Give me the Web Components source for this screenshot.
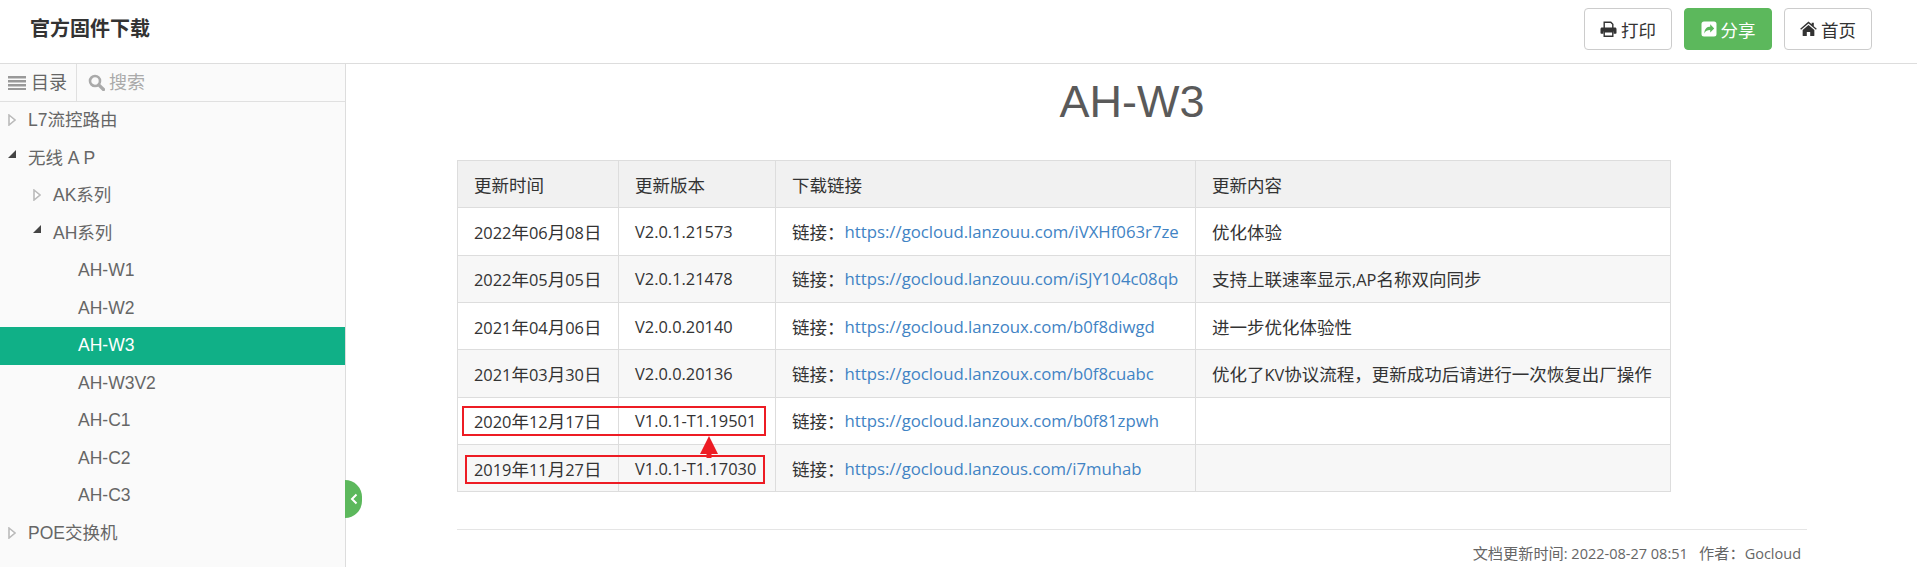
<!DOCTYPE html>
<html lang="zh-CN">
<head>
<meta charset="UTF-8">
<title>AH-W3</title>
<style>
  html, body { margin: 0; height: 100%; overflow: hidden; background: #fff; }
  body { font-family: "Liberation Sans", "Noto Sans CJK SC", sans-serif; }
  fw-row a { color: #4183c4; font-size: 16.750px; }
  fw-row i { font-style: normal; font-size: 17.500px; }
  doc-article span[slot="foot"] i { font-style: normal; font-size: 15.200px; }
</style>
</head>
<body>
<doc-header>
  <span slot="title">官方固件下载</span>
  <doc-button icon="print">打印</doc-button>
  <doc-button icon="share" primary>分享</doc-button>
  <doc-button icon="home">首页</doc-button>
</doc-header>
<doc-shell>
  <doc-sidebar slot="side">
    <tree-item arrow="closed">L7流控路由</tree-item>
    <tree-item arrow="open">无线 A P</tree-item>
    <tree-item level="1" arrow="closed">AK系列</tree-item>
    <tree-item level="1" arrow="open">AH系列</tree-item>
    <tree-item level="2">AH-W1</tree-item>
    <tree-item level="2">AH-W2</tree-item>
    <tree-item level="2" active>AH-W3</tree-item>
    <tree-item level="2">AH-W3V2</tree-item>
    <tree-item level="2">AH-C1</tree-item>
    <tree-item level="2">AH-C2</tree-item>
    <tree-item level="2">AH-C3</tree-item>
    <tree-item arrow="closed">POE交换机</tree-item>
  </doc-sidebar>
  <doc-article>
    <span slot="title">AH-W3</span>
    <fw-table>
      <fw-row head><span>更新时间</span><span>更新版本</span><span>下载链接</span><span>更新内容</span></fw-row>
      <fw-row><span>2022年06月08日</span><span>V2.0.1.21573</span><span>链接：<a>https://gocloud.lanzouu.com/iVXHf063r7ze</a></span><span>优化体验</span></fw-row>
      <fw-row striped><span>2022年05月05日</span><span>V2.0.1.21478</span><span>链接：<a>https://gocloud.lanzouu.com/iSJY104c08qb</a></span><span>支持上联速率显示,AP名称双向同步</span></fw-row>
      <fw-row><span>2021年04月06日</span><span>V2.0.0.20140</span><span>链接：<a>https://gocloud.lanzoux.com/b0f8diwgd</a></span><span>进一步优化体验性</span></fw-row>
      <fw-row striped><span>2021年03月30日</span><span>V2.0.0.20136</span><span>链接：<a>https://gocloud.lanzoux.com/b0f8cuabc</a></span><span>优化了KV协议流程，更新成功后请进行一次恢复出厂操作</span></fw-row>
      <fw-row><span>2020年12月17日</span><span>V1.0.1-T1.19501</span><span>链接：<a>https://gocloud.lanzoux.com/b0f81zpwh</a></span><span></span></fw-row>
      <fw-row striped><span>2019年11月27日</span><span>V1.0.1-T1.17030</span><span>链接：<a>https://gocloud.lanzous.com/i7muhab</a></span><span></span></fw-row>
    </fw-table>
    <span slot="foot"><i>文档更新时间</i>: 2022-08-27 08:51 &nbsp; <i>作者：</i>Gocloud</span>
  </doc-article>
</doc-shell>

<script>
  const ICONS = {
    print: '<svg width="17" height="16" viewBox="0 0 17 16"><path d="M4.200 7V1.200h6.600l2 2V7" fill="none" stroke="currentColor" stroke-width="1.400"/><path fill="currentColor" d="M2 6.500h13c.9 0 1.500.6 1.500 1.500v4c0 .5-.3.800-.8.800H13.500v-2.300h-10v2.300H1.300c-.5 0-.8-.3-.8-.8V8c0-.9.6-1.500 1.500-1.500z"/><path d="M4.200 10.800h8.600v4.500H4.200z" fill="#fff" stroke="currentColor" stroke-width="1.400"/></svg>',
    share: '<svg width="16" height="16" viewBox="0 0 16 16"><path fill="currentColor" fill-rule="evenodd" d="M3 .5h10A2.500 2.500 0 0 1 15.500 3v10a2.500 2.500 0 0 1-2.500 2.500H3A2.500 2.500 0 0 1 .5 13V3A2.500 2.500 0 0 1 3 .5zM9.200 3.300v2.400C6 5.800 3.600 7.300 3.300 12.600c1.200-2.900 3-3.600 5.900-3.600v2.400l4-4z"/></svg>',
    home: '<svg width="17" height="16" viewBox="0 0 16 15"><path fill="currentColor" d="M8 .5l3 2.600V1.600h2v3.200l2.800 2.500-.8.900L8 2.300 1 8.200l-.8-.9zM8 3.700l5.500 4.700v5.100c0 .4-.3.700-.7.700H9.600v-3.800H6.400v3.800H3.200c-.4 0-.7-.3-.7-.7V8.400z"/></svg>'
  };

  class DocHeader extends HTMLElement {
    constructor() {
      super();
      this.attachShadow({mode: 'open'}).innerHTML = `
        <style>
          :host { display: flex; align-items: center; justify-content: space-between; height: 63px; border-bottom: 1px solid #ddd; padding: 0 45px 0 30px; background: #fff; }
          .title { font-size: 20px; font-weight: bold; color: #333; margin-top: -9px; }
          .tools { display: flex; gap: 12px; margin-top: -5px; }
        </style>
        <div class="title"><slot name="title"></slot></div>
        <div class="tools"><slot></slot></div>`;
    }
  }

  class DocButton extends HTMLElement {
    constructor() {
      super();
      this.attachShadow({mode: 'open'}).innerHTML = `
        <style>
          :host { display: inline-flex; align-items: center; justify-content: center; gap: 4px; width: 88px; height: 42px; box-sizing: border-box; border: 1px solid #ccc; border-radius: 4px; font-size: 17.500px; color: #333; background: #fff; }
          :host([primary]) { background: #5cb85c; border-color: #5cb85c; color: #fff; }
          svg { display: block; }
        </style>
        ${ICONS[this.getAttribute('icon')] || ''}<slot></slot>`;
    }
  }

  class DocShell extends HTMLElement {
    constructor() {
      super();
      this.attachShadow({mode: 'open'}).innerHTML = `
        <style>
          :host { display: flex; height: 503px; position: relative; }
          .side { width: 345px; flex: none; background: #fafafa; border-right: 1px solid #ddd; }
          .main { flex: 1; min-width: 0; }
          .toggle { position: absolute; left: 345px; top: 416px; width: 17px; height: 38px; background: #5cb85c; border-radius: 0 19px 19px 0; color: #fff; display: flex; align-items: center; justify-content: center; }
        </style>
        <div class="side"><slot name="side"></slot></div>
        <div class="main"><slot></slot></div>
        <div class="toggle"><svg width="8" height="12" viewBox="0 0 8 12"><path d="M6.500 1.500L2 6l4.500 4.500" fill="none" stroke="currentColor" stroke-width="2"/></svg></div>`;
    }
  }

  class DocSidebar extends HTMLElement {
    constructor() {
      super();
      this.attachShadow({mode: 'open'}).innerHTML = `
        <style>
          :host { display: block; }
          .bar { display: flex; height: 37px; border-bottom: 1px solid #e0e0e0; font-size: 18px; line-height: 36px; }
          .toc { display: flex; align-items: center; gap: 5px; width: 77px; padding-left: 8px; box-sizing: border-box; border-right: 1px solid #e0e0e0; color: #666; }
          .find { display: flex; align-items: center; gap: 4px; padding-left: 11px; color: #aaa; }
          svg { display: block; }
        </style>
        <div class="bar">
          <div class="toc"><svg width="18" height="15" viewBox="0 0 18 15"><path fill="#999" d="M0 1h18v2.500H0zM0 5h18v2.500H0zM0 9h18v2.500H0zM0 13h18v2H0z"/></svg>目录</div>
          <div class="find"><svg width="17" height="17" viewBox="0 0 17 17"><circle cx="7" cy="7" r="5" fill="none" stroke="#aaa" stroke-width="2.600"/><path d="M10.800 10.800l4.700 4.700" stroke="#aaa" stroke-width="3.200" stroke-linecap="round"/></svg>搜索</div>
        </div>
        <slot></slot>`;
    }
  }

  class TreeItem extends HTMLElement {
    constructor() {
      super();
      const level = +this.getAttribute('level') || 0;
      const arrow = this.getAttribute('arrow');
      let mark = '';
      if (arrow === 'closed') mark = '<svg class="mark" style="top:12px" width="8" height="12" viewBox="0 0 8 12"><path d="M1 1l6 5-6 5z" fill="#fff" stroke="#bbb" stroke-width="1.600"/></svg>';
      if (arrow === 'open') mark = '<svg class="mark" style="top:10.500px" width="8" height="8" viewBox="0 0 8 8"><path d="M8 0v8H0z" fill="#444"/></svg>';
      this.attachShadow({mode: 'open'}).innerHTML = `
        <style>
          :host { display: block; height: 37.550px; line-height: 37.550px; font-size: 17.500px; color: #666; position: relative; padding-left: ${28 + level * 25}px; box-sizing: border-box; }
          :host([active]) { background: #10b087; color: #fff; }
          .mark { position: absolute; left: ${8 + level * 25}px; }
        </style>
        ${mark}<slot></slot>`;
    }
  }

  class DocArticle extends HTMLElement {
    constructor() {
      super();
      this.attachShadow({mode: 'open'}).innerHTML = `
        <style>
          :host { display: block; width: 1350px; margin-left: 111px; color: #333; }
          h1 { margin: 0; height: 96px; line-height: 76px; text-align: center; font-size: 45px; font-weight: normal; color: #5a5a5a; }
          .foot { margin-top: 37px; border-top: 1px solid #e5e5e5; padding: 11px 6px 0 0; text-align: right; font: 14.500px "Open Sans", "Noto Sans CJK SC", sans-serif; color: #666; }
        </style>
        <h1><slot name="title"></slot></h1>
        <slot></slot>
        <div class="foot"><slot name="foot"></slot></div>`;
    }
  }

  class FwTable extends HTMLElement {
    constructor() {
      super();
      this.attachShadow({mode: 'open'}).innerHTML = `
        <style>
          :host { display: block; width: 1214px; position: relative; border-top: 1px solid #ddd; border-left: 1px solid #ddd; box-sizing: border-box; font: 16.400px "Open Sans", "Noto Sans CJK SC", sans-serif; color: #333; }
          .box { position: absolute; border: 2.500px solid #ed1c24; box-sizing: border-box; }
          .one { left: 4px; top: 245px; width: 304px; height: 30px; }
          .two { left: 7px; top: 294px; width: 300px; height: 29px; }
          svg { position: absolute; left: 242px; top: 275px; }
        </style>
        <slot></slot>
        <div class="box one"></div>
        <div class="box two"></div>
        <svg width="18" height="22" viewBox="0 0 18 22"><path fill="#ed1c24" d="M9 0l9 18H11.500v4h-5v-4H0z"/></svg>`;
    }
  }

  class FwRow extends HTMLElement {
    constructor() {
      super();
      this.attachShadow({mode: 'open'}).innerHTML = `
        <style>
          :host { display: grid; grid-template-columns: 161px 157px 420px 475px; height: 47.350px; box-sizing: border-box; border-bottom: 1px solid #ddd; }
          :host([striped]) { background: #f7f7f7; }
          :host([head]) { background: #f1f1f1; }
          ::slotted(span) { display: flex; align-items: center; padding-left: 16px; border-right: 1px solid #ddd; white-space: pre; box-sizing: border-box; overflow: hidden; }
        </style>
        <slot></slot>`;
    }
    connectedCallback() {
      // the chinese runs are set a little larger than the latin ones
      this.querySelectorAll('span').forEach(cell => {
        [...cell.childNodes].filter(n => n.nodeType === 3).forEach(n => {
          const box = document.createElement('b');
          box.style.fontWeight = 'normal';
          box.innerHTML = n.textContent.replace(/[^\x00-\x7f]+/g, '<i>$&</i>');
          n.replaceWith(box);
        });
      });
    }
  }

  customElements.define('doc-header', DocHeader);
  customElements.define('doc-button', DocButton);
  customElements.define('doc-shell', DocShell);
  customElements.define('doc-sidebar', DocSidebar);
  customElements.define('tree-item', TreeItem);
  customElements.define('doc-article', DocArticle);
  customElements.define('fw-table', FwTable);
  customElements.define('fw-row', FwRow);
</script>
</body>
</html>
